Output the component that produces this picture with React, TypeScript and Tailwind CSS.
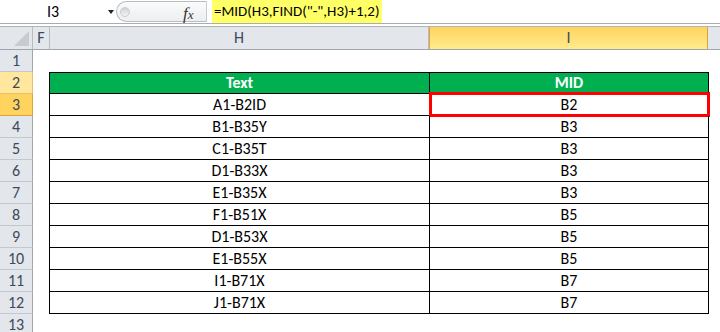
import React from "react";

const rows: [string, string][] = [
  ["A1-B2ID", "B2"],
  ["B1-B35Y", "B3"],
  ["C1-B35T", "B3"],
  ["D1-B33X", "B3"],
  ["E1-B35X", "B3"],
  ["F1-B51X", "B5"],
  ["D1-B53X", "B5"],
  ["E1-B55X", "B5"],
  ["I1-B71X", "B7"],
  ["J1-B71X", "B7"],
];

const font = { fontFamily: "Calibri, Carlito, Lato, 'Liberation Sans', sans-serif" };

function RowHead({ n, state }: { n: number; state?: "sel" | "hl" }) {
  const cls =
    state === "sel"
      ? "bg-[#ffd45e] border-[#e0a33c] border-r border-b"
      : state === "hl"
        ? "bg-[#ffe79d] border-[#e7c06b] border-r border-b"
        : "bg-[#e3e6ea] border-[#c3c8ce] border-r-[#9fa6ae] border-r border-b";
  return (
    <div
      className={`w-[33px] h-[22px] shrink-0 flex items-center justify-center text-[16px] text-[#3b4a5e] ${cls}`}
    >
      {n}
    </div>
  );
}

export default function App() {
  return (
    <div className="w-[720px] h-[332px] overflow-hidden bg-white" style={font}>
      {/* formula bar */}
      <div className="h-[24px] flex items-stretch border-b border-[#a9acb0] bg-white relative">
        <div className="w-[116px] flex items-center relative">
          <span className="ml-[47px] text-[16px] text-black">I3</span>
          <span className="absolute left-[108px] top-[10px] w-0 h-0 border-l-[3.5px] border-r-[3.5px] border-t-[4px] border-l-transparent border-r-transparent border-t-[#222]" />
        </div>
        <div className="w-[90px] mt-[1px] mb-[1px] rounded-l-full border border-r-0 border-[#b9bcc0] bg-gradient-to-b from-[#fbfbfb] to-[#eceef0] flex items-center relative">
          <span className="ml-[3px] w-[10px] h-[10px] rounded-full bg-gradient-to-b from-[#cfd2d6] to-[#f4f4f5] border border-[#c9ccd0]" />
          <span
            className="absolute left-[66px] top-[0px] h-[22px] flex items-center italic text-[#333]"
            style={{ fontFamily: "'Liberation Serif', serif" }}
          >
            <span className="text-[17px] leading-none">f</span>
            <span className="text-[13px] leading-none mt-[3px]">x</span>
          </span>
        </div>
        <div className="w-px bg-[#c8cbcf] my-[1px]" />
        <div className="flex items-center pl-[5px]">
          <span className="bg-[#ffff66] h-[23px] px-[2px] flex items-center text-[15px] text-black">
            =MID(H3,FIND("-",H3)+1,2)
          </span>
        </div>
      </div>
      <div className="h-[3px] bg-white border-b border-[#b0b3b7]" />

      {/* column headers */}
      <div className="flex h-[23px] bg-[#e3e6ea] border-b border-[#9fa6ae]">
        <div className="w-[33px] shrink-0 border-r border-[#b7bcc2] relative">
          <svg className="absolute right-[3px] bottom-[3px]" width="15" height="15" viewBox="0 0 15 15">
            <polygon points="15,0 15,15 0,15" fill="#c7cbd0" />
          </svg>
        </div>
        <div className="w-[17px] shrink-0 border-r border-[#b7bcc2] flex items-center justify-center text-[16px] text-[#3b4a5e]">
          F
        </div>
        <div className="w-[379px] shrink-0 border-r border-[#b7bcc2] flex items-center justify-center text-[16px] text-[#3b4a5e]">
          H
        </div>
        <div className="w-[279px] shrink-0 border-x border-[#e0a33c] bg-gradient-to-b from-[#ffd45e] to-[#ffeb8c] flex items-center justify-center text-[16px] text-[#3b4a5e]">
          I
        </div>
        <div className="flex-1" />
      </div>

      {/* row 1 */}
      <div className="flex">
        <RowHead n={1} />
      </div>

      {/* row 2 - table header */}
      <div className="flex">
        <RowHead n={2} state="hl" />
        <div className="w-[16px] shrink-0" />
        <div className="w-[380px] shrink-0 h-[22px] bg-[#00b050] border-l border-t border-b border-black flex items-center justify-center text-white font-bold text-[16px]">
          Text
        </div>
        <div className="w-[280px] shrink-0 h-[22px] bg-[#00b050] border-x border-t border-b border-black flex items-center justify-center text-white font-bold text-[16px]">
          MID
        </div>
      </div>

      {rows.map(([t, m], i) => (
        <div key={i} className="flex">
          <RowHead n={i + 3} state={i === 0 ? "sel" : undefined} />
          <div className="w-[16px] shrink-0" />
          <div className="w-[380px] shrink-0 h-[22px] border-l border-b border-black flex items-center justify-center text-black text-[16px]">
            {t}
          </div>
          <div className="w-[280px] shrink-0 h-[22px] border-x border-b border-black flex items-center justify-center text-black text-[16px] relative">
            {m}
            {i === 0 && (
              <span className="absolute left-[-1px] right-[-2px] top-[-2px] bottom-[-2px] border-[3px] border-[#ff0000]" />
            )}
          </div>
        </div>
      ))}

      <div className="flex">
        <RowHead n={13} />
      </div>
    </div>
  );
}
